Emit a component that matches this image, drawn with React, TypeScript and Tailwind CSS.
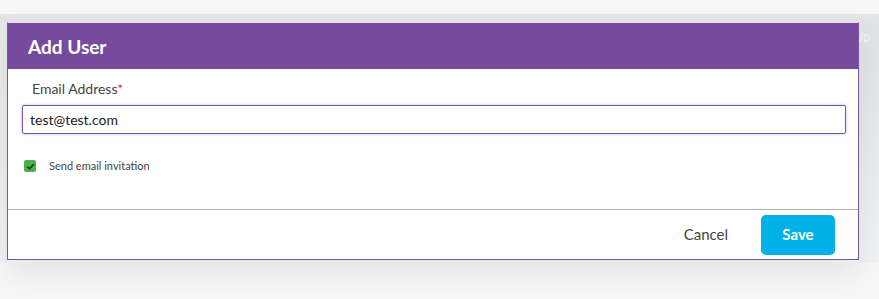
import { useState } from 'react'

export default function App() {
  const [email, setEmail] = useState('test@test.com')
  const [invite, setInvite] = useState(true)

  return (
    <div className="relative w-[879px] h-[299px] overflow-hidden bg-[#f7f7f7] font-['Lato',sans-serif]">
      {/* page behind the dialog */}
      <div className="h-[14px] bg-[#f6f6f6]" />
      <div className="h-[9px] bg-[#e3e4e5]" />
      <div className="flex">
        <div className="w-[7px] h-[240px] bg-gradient-to-b from-[#e6e7e8] to-[#f1f2f3]" />
        <div className="w-[851px]" />
        <div className="w-[21px] h-[240px] bg-gradient-to-b from-[#e0e1e2] to-[#f1f2f3] pt-[4px] text-[13px] text-[#f4f4f4] overflow-hidden">
          <span className="-ml-[4px]">Up</span>
        </div>
      </div>

      {/* dialog */}
      <div className="absolute left-[7px] top-[22px] w-[852px] border border-[#7a55a3] border-t-[#f1dff0] bg-white shadow-[0_14px_28px_rgba(0,0,0,0.08)]">
        <div className="h-[46px] bg-[#764b9d] pl-[20px] flex items-center">
          <h1 className="text-[19px] font-bold text-white leading-none">Add User</h1>
        </div>

        <div className="h-[140px] px-[14px] pt-[12px]">
          <label className="block pl-[10px] text-[14px] text-[#444] leading-[16px]">
            Email Address<span className="text-[#d6372c]">*</span>
          </label>
          <input
            value={email}
            onChange={e => setEmail(e.target.value)}
            className="mt-[8px] w-[824px] h-[29px] border border-[#7a55a3] rounded-[2px] px-[7px] text-[14px] text-[#222] outline-none shadow-[0_0_3px_rgba(122,85,163,0.45)]"
          />
          <label className="mt-[24px] flex items-center gap-[13px] pl-[2px] text-[11px] text-[#444]">
            <span
              onClick={() => setInvite(!invite)}
              className="w-[12px] h-[12px] rounded-[2px] bg-[#4cae4f] flex items-center justify-center"
            >
              {invite && (
                <svg width="9" height="9" viewBox="0 0 10 10">
                  <path d="M1.5 5.2 L4 7.6 L8.6 2.4" fill="none" stroke="#1d3b1f" strokeWidth="1.8" />
                </svg>
              )}
            </span>
            Send email invitation
          </label>
        </div>

        <div className="h-[50px] border-t border-[#b4b4b4] flex items-center justify-end pr-[23px]">
          <button className="text-[15px] text-[#444] mr-[33px]">Cancel</button>
          <button className="w-[74px] h-[40px] rounded-[5px] bg-[#00b1e7] text-white text-[15px] font-bold">
            Save
          </button>
        </div>
      </div>
    </div>
  )
}
